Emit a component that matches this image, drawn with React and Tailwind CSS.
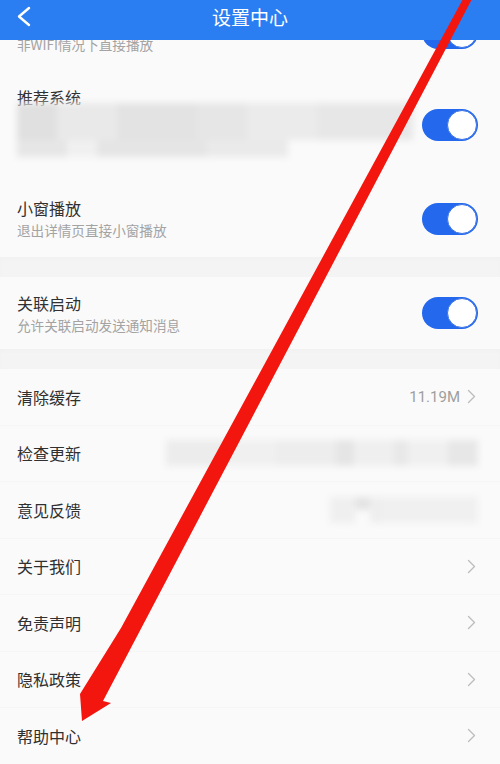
import React from "react";

const FONT = { fontFamily: '"Noto Sans CJK SC", "Noto Sans", sans-serif' };

function Toggle() {
  return (
    <div className="relative flex h-[32px] w-[56px] shrink-0 items-center justify-end rounded-full bg-[#2468ee] pr-[1px]">
      <div className="h-[30px] w-[30px] rounded-full border border-[#3b74e6] bg-white" />
    </div>
  );
}

function Chevron() {
  return (
    <svg width="9" height="15" viewBox="0 0 9 15" className="shrink-0">
      <path d="M1.5 1.5 L7.5 7.5 L1.5 13.5" fill="none" stroke="#bdbdbd" strokeWidth="1.4" strokeLinecap="round" strokeLinejoin="round" />
    </svg>
  );
}

function ToggleRow({ title, sub, className = "" }) {
  return (
    <div className={`flex items-center justify-between pl-[17px] pr-[22px] bg-[#fafafa] ${className}`}>
      <div className="flex flex-col">
        <div className="text-[16px] leading-[22px] text-[#303030]">{title}</div>
        <div className="mt-[1px] text-[13.6px] leading-[20px] text-[#a3a3a3]">{sub}</div>
      </div>
      <Toggle />
    </div>
  );
}

function ListRow({ title, children }) {
  return (
    <div className="flex h-[56.5px] shrink-0 items-center justify-between border-b border-[#f6f6f6] bg-[#fafafa] pl-[17px] pr-[24px]">
      <div className="text-[16px] leading-[22px] text-[#303030]">{title}</div>
      {children}
    </div>
  );
}

function Band() {
  return <div className="h-[20px] shrink-0 bg-[#f4f4f4] shadow-[inset_0_2px_4px_rgba(0,0,0,0.015)]" />;
}

export default function App() {
  return (
    <div className="relative h-[764px] w-[500px] overflow-hidden bg-[#fafafa]" style={FONT}>
      {/* header */}
      <div className="relative z-10 h-[40px] shrink-0 bg-[#2b7ef1]">
        <div className="relative flex h-[34px] items-center justify-center">
          <svg width="16" height="22" viewBox="0 0 16 22" className="absolute left-[16px] top-[6px]">
            <path d="M13 2 L3 10.5 L13 19" fill="none" stroke="#ffffff" strokeWidth="2.4" strokeLinecap="round" strokeLinejoin="round" />
          </svg>
          <div className="text-[19px] leading-[24px] text-white">设置中心</div>
        </div>
      </div>

      {/* content */}
      <div className="flex flex-col">
        <ToggleRow className="-mt-[45px] h-[75px]" title="WIFI自动播放" sub="非WIFI情况下直接播放" />

        {/* 推荐系统 */}
        <div className="flex h-[110px] items-center justify-between bg-[#fafafa] pl-[17px] pr-[22px]">
          <div className="flex flex-col self-start pt-[16px]">
            <div className="text-[16px] leading-[22px] text-[#303030]">推荐系统</div>
            <div className="-mt-[5px] flex flex-col blur-[3px]">
              <div className="flex h-[37px] w-[396px]">
                <div className="h-full w-[40px] bg-[#e0e0e0]" />
                <div className="h-full w-[60px] bg-[#e9e9e9]" />
                <div className="h-full w-[80px] bg-[#e3e3e3]" />
                <div className="h-full w-[50px] bg-[#e6e6e6]" />
                <div className="h-full w-[70px] bg-[#ebebeb]" />
                <div className="h-full w-[96px] bg-[#e7e7e7]" />
              </div>
              <div className="flex h-[17px] w-[271px]">
                <div className="h-full w-[50px] bg-[#e6e6e6]" />
                <div className="h-full w-[30px] bg-[#f0f0f0]" />
                <div className="h-full w-[110px] bg-[#e5e5e5]" />
                <div className="h-full w-[81px] bg-[#eaeaea]" />
              </div>
            </div>
          </div>
          <Toggle />
        </div>

        <ToggleRow className="h-[77px]" title="小窗播放" sub="退出详情页直接小窗播放" />
        <Band />
        <ToggleRow className="h-[72px]" title="关联启动" sub="允许关联启动发送通知消息" />
        <Band />

        <ListRow title="清除缓存">
          <div className="flex items-center gap-[7px]">
            <span className="text-[15px] text-[#9e9e9e]" style={{ fontFamily: "Roboto, sans-serif" }}>11.19M</span>
            <Chevron />
          </div>
        </ListRow>
        <ListRow title="检查更新">
          <div className="-mr-[2px] flex h-[26px] w-[312px] blur-[3px]">
            <div className="h-full w-[60px] bg-[#ececec]" />
            <div className="h-full w-[50px] bg-[#f0f0f0]" />
            <div className="h-full w-[60px] bg-[#ededed]" />
            <div className="h-full w-[18px] bg-[#e5e5e5]" />
            <div className="h-full w-[40px] bg-[#efefef]" />
            <div className="h-full w-[14px] bg-[#e8e8e8]" />
            <div className="h-full w-[40px] bg-[#f0f0f0]" />
            <div className="h-full w-[30px] bg-[#e7e7e7]" />
          </div>
        </ListRow>
        <ListRow title="意见反馈">
          <div className="-mr-[2px] flex h-[26px] w-[148px] blur-[3px]">
            <div className="h-full w-[25px] bg-[#efefef]" />
            <div className="h-[13px] w-[15px] bg-[#e4e4e4]" />
            <div className="h-full w-[12px] bg-[#eeeeee]" />
            <div className="h-full w-[96px] bg-[#f0f0f0]" />
          </div>
        </ListRow>
        <ListRow title="关于我们"><Chevron /></ListRow>
        <ListRow title="免责声明"><Chevron /></ListRow>
        <ListRow title="隐私政策"><Chevron /></ListRow>
        <ListRow title="帮助中心"><Chevron /></ListRow>
      </div>

      {/* red annotation arrow */}
      <svg className="pointer-events-none absolute left-0 top-0 z-20" width="500" height="764" viewBox="0 0 500 764">
        <polygon
          points="463,-1 472,-1 103,701 111,703 82,721 80,694 121,628"
          fill="#f3160e"
        />
      </svg>
    </div>
  );
}
